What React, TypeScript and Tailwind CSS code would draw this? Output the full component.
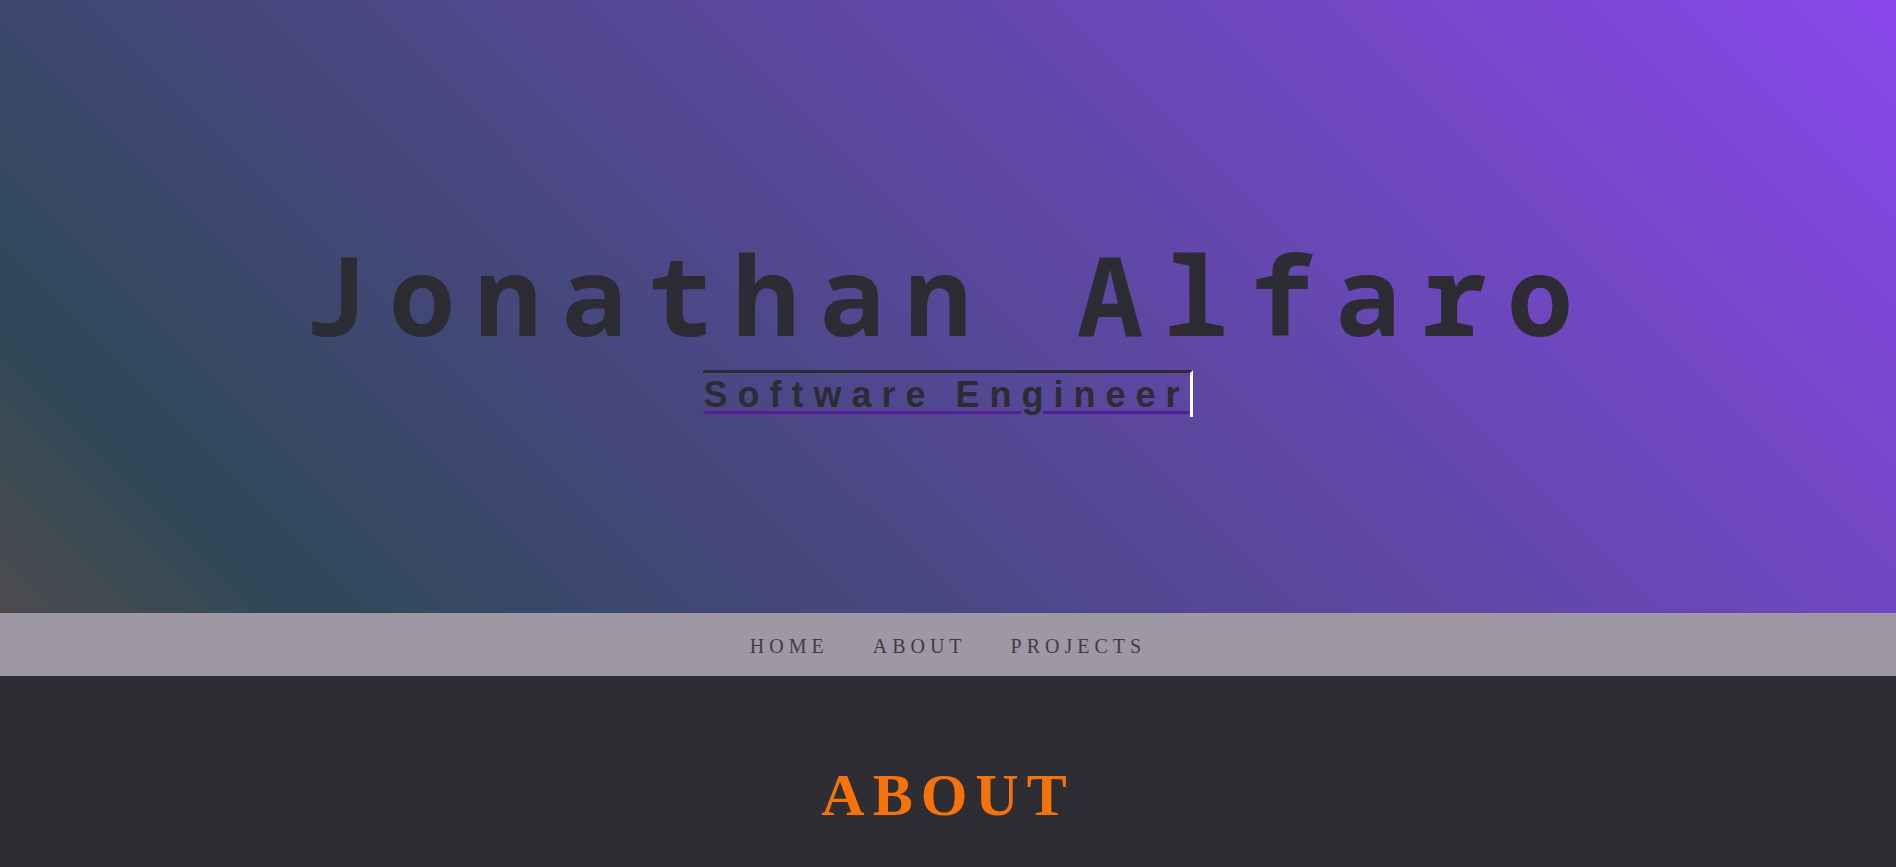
import React from "react";

export default function App() {
  const links = ["Home", "About", "Projects"];
  return (
    <div className="w-full min-h-screen bg-[#2e2d33]">
      <header className="h-[613px] w-full bg-[linear-gradient(45deg,#4d4c4d_0%,#2f4858_12%,#8a47eb_100%)] pt-[230px] flex flex-col items-center">
        <h1 className="m-0 text-[110px] leading-[126px] tracking-[20px] text-[#2d2b33] font-bold whitespace-nowrap [font-family:'Noto_Sans_Mono','DejaVu_Sans_Mono',monospace]">
          Jonathan Alfaro
        </h1>
        <div className="mt-[14px] inline-block border-t-[3px] border-r-[3px] border-t-[#2d2b33] border-r-white border-b-0 border-l-0">
          <span className="block text-[36px] leading-[44px] font-bold tracking-[10px] text-[#2d2b33] whitespace-nowrap underline decoration-[#5b1a9b] decoration-[3px] underline-offset-[4px] [font-family:'Liberation_Sans',Arial,sans-serif]">
            Software Engineer
          </span>
        </div>
      </header>
      <nav className="h-[63px] w-full bg-[#9e97a4] pt-[22px] flex justify-center gap-[44px]">
        {links.map((l) => (
          <a
            key={l}
            className="uppercase text-[20px] leading-[23px] tracking-[5px] text-[#403c45] [font-family:'Liberation_Serif','Times_New_Roman',serif]"
          >
            {l}
          </a>
        ))}
      </nav>
      <section className="w-full bg-[#2e2d33] pt-[85px] min-h-[600px] flex flex-col items-center">
        <h2 className="m-0 text-[60px] leading-[69px] font-bold tracking-[8px] text-[#f6730a] uppercase [font-family:'Liberation_Serif','Times_New_Roman',serif]">
          About
        </h2>
      </section>
    </div>
  );
}
